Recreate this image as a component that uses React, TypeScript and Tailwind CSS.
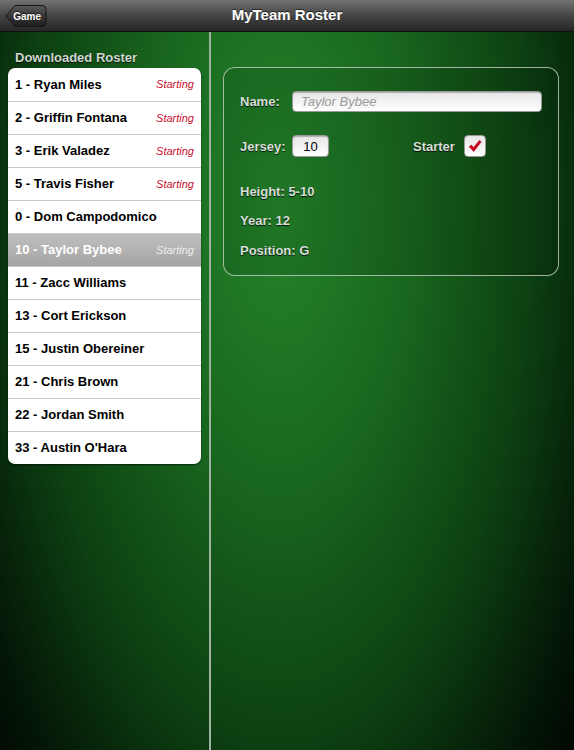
import React from "react";

interface Player {
  num: number;
  name: string;
  starting: boolean;
}

const PLAYERS: Player[] = [
  { num: 1, name: "Ryan Miles", starting: true },
  { num: 2, name: "Griffin Fontana", starting: true },
  { num: 3, name: "Erik Valadez", starting: true },
  { num: 5, name: "Travis Fisher", starting: true },
  { num: 0, name: "Dom Campodomico", starting: false },
  { num: 10, name: "Taylor Bybee", starting: true },
  { num: 11, name: "Zacc Williams", starting: false },
  { num: 13, name: "Cort Erickson", starting: false },
  { num: 15, name: "Justin Obereiner", starting: false },
  { num: 21, name: "Chris Brown", starting: false },
  { num: 22, name: "Jordan Smith", starting: false },
  { num: 33, name: "Austin O'Hara", starting: false },
];

const SELECTED = 10;

function BackButton() {
  return (
    <button className="relative w-[42px] h-[24px] flex items-center justify-end pr-[6px]">
      <svg className="absolute inset-0" width="42" height="24" viewBox="0 0 42 24">
        <defs>
          <linearGradient id="bb" x1="0" y1="0" x2="0" y2="1">
            <stop offset="0" stopColor="#5a5a5a" />
            <stop offset="0.5" stopColor="#363636" />
            <stop offset="1" stopColor="#1e1e1e" />
          </linearGradient>
        </defs>
        <path
          d="M1 12 L10 1.5 H37 Q41 1.5 41 5.5 V18.5 Q41 22.5 37 22.5 H10 Z"
          fill="url(#bb)"
          stroke="#151515"
          strokeWidth="1"
        />
      </svg>
      <span className="relative text-[10px] font-bold text-white [text-shadow:0_-1px_0_rgba(0,0,0,0.7)]">Game</span>
    </button>
  );
}

export default function App() {
  return (
    <div
      className="w-[574px] h-[750px] flex flex-col overflow-hidden"
      style={{ fontFamily: '"Liberation Sans", Arial, sans-serif' }}
    >
      {/* Nav bar */}
      <div className="relative h-[32px] flex items-center justify-center bg-gradient-to-b from-[#727272] via-[#454545] to-[#262626] border-b border-[#111]">
        <div className="absolute left-[5px] top-[4px]">
          <BackButton />
        </div>
        <h1 className="text-[15px] font-bold text-white [text-shadow:0_-1px_0_rgba(0,0,0,0.6)]">MyTeam Roster</h1>
      </div>

      {/* Body */}
      <div className="flex-1 flex bg-[radial-gradient(ellipse_380px_820px_at_280px_170px,#24852b_0%,#19661e_35%,#0d4212_65%,#041807_90%,#020a03_100%)]">
        {/* Left column */}
        <div className="w-[209px] flex flex-col">
          <p className="mt-[18px] pl-[15px] text-[13px] leading-[16px] font-bold text-[#cfd6cf] [text-shadow:0_1px_1px_rgba(0,0,0,0.8)]">
            Downloaded Roster
          </p>
          <div className="mt-[2px] mx-[8px] bg-white rounded-[7px] overflow-hidden shadow-[0_1px_2px_rgba(0,0,0,0.6)]">
            {PLAYERS.map((p, i) => {
              const sel = p.num === SELECTED;
              return (
                <div
                  key={p.num}
                  className={`h-[33px] flex items-center justify-between pl-[7px] pr-[7px] ${
                    i > 0 ? "border-t border-[#c9c9c9]" : ""
                  } ${sel ? "bg-gradient-to-b from-[#c0c0c0] to-[#a4a4a4]" : ""}`}
                >
                  <span className={`text-[13px] font-bold ${sel ? "text-white" : "text-black"}`}>
                    {p.num} - {p.name}
                  </span>
                  {p.starting && (
                    <span className={`text-[11px] italic ${sel ? "text-[#eeeeee]" : "text-[#c8102e]"}`}>Starting</span>
                  )}
                </div>
              );
            })}
          </div>
        </div>

        {/* Divider */}
        <div className="w-[2px] bg-[#9fb19f]" />

        {/* Right column */}
        <div className="flex-1">
          <div className="mt-[35px] ml-[12px] w-[336px] h-[209px] rounded-[12px] border-[1.5px] border-[#c4d2c4]/80 bg-black/10 pt-[23px] pl-[16px] pb-[10px] flex flex-col text-[13px] font-bold text-[#d6ded6] [text-shadow:0_1px_1px_rgba(0,0,0,0.85)]">
            <div className="flex items-center h-[22px]">
              <span className="w-[52px]">Name:</span>
              <div className="w-[250px] h-[21px] rounded-[4px] bg-gradient-to-b from-[#e6e6e6] to-white border border-[#9a9a9a] flex items-center pl-[8px] shadow-[inset_0_1px_1px_rgba(0,0,0,0.25)]">
                <span className="text-[13px] italic font-normal text-[#9a9a9a] [text-shadow:none]">Taylor Bybee</span>
              </div>
            </div>

            <div className="flex items-center h-[22px] mt-[23px]">
              <span className="w-[52px]">Jersey:</span>
              <div className="w-[37px] h-[22px] rounded-[4px] bg-gradient-to-b from-[#e6e6e6] to-white border border-[#9a9a9a] flex items-center justify-center shadow-[inset_0_1px_1px_rgba(0,0,0,0.25)]">
                <span className="text-[13px] font-normal text-black [text-shadow:none]">10</span>
              </div>
              <span className="ml-[84px] w-[51px]">Starter</span>
              <div className="w-[22px] h-[22px] rounded-[4px] bg-gradient-to-b from-[#e6e6e6] to-white border border-[#9a9a9a] flex items-center justify-center">
                <svg width="16" height="16" viewBox="0 0 16 16">
                  <path d="M2.2 8.8 L4.4 7 L6.6 9.6 L12.4 2.4 L14.2 3.8 L6.8 13.4 Z" fill="#d0021b" stroke="#a80014" strokeWidth="0.6" strokeLinejoin="round" />
                </svg>
              </div>
            </div>

            <div className="mt-[20px] h-[30px] flex items-center">Height: 5-10</div>
            <div className="h-[30px] flex items-center">Year: 12</div>
            <div className="h-[30px] flex items-center">Position: G</div>
          </div>
        </div>
      </div>
    </div>
  );
}
